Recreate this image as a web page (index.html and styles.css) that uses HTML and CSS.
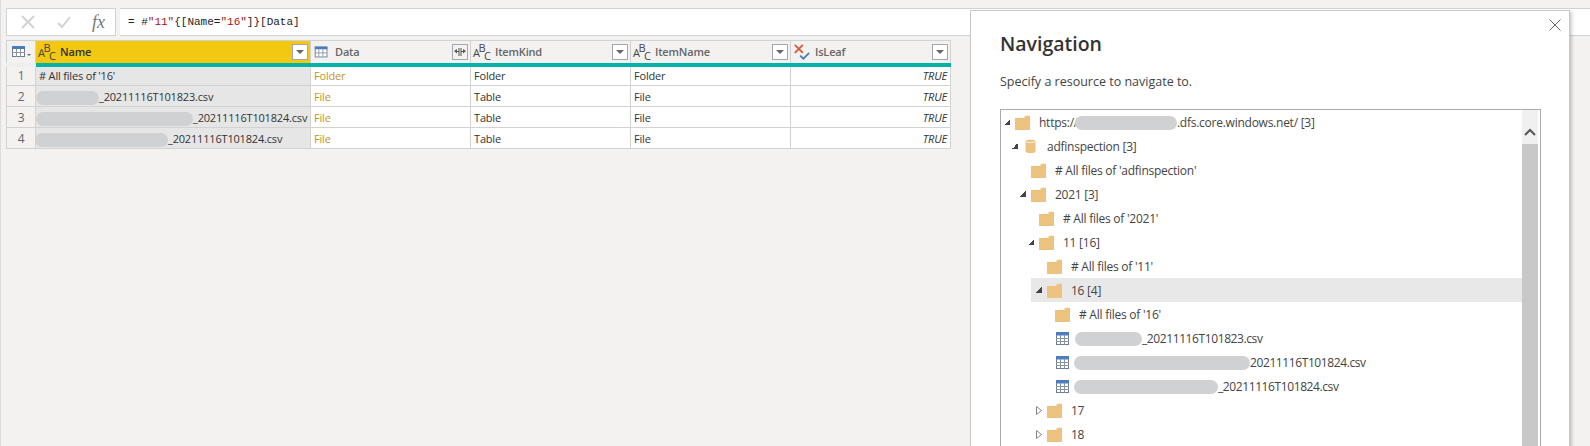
FILE: index.html
```html
<!DOCTYPE html>
<html lang="en">
<head>
    <meta charset="UTF-8">
    <title>Navigation</title>
    <link rel="stylesheet" href="styles.css">
</head>
<body>

<svg class="defs" width="0" height="0" aria-hidden="true">
    <symbol id="i-folder" viewBox="0 0 15 15">
        <path d="M0 3h9.500V1.500l1-.8H15V15H0z" fill="#ecc47f"/>
    </symbol>
    <symbol id="i-can" viewBox="0 0 10 15">
        <path d="M0 2.200C0 .4 10 .4 10 2.200v10.600C10 14.600 0 14.600 0 12.800z" fill="#ecc47f"/>
        <path d="M.5 2.800c2 1 7 1 9 0" fill="none" stroke="#fff" stroke-width=".8"/>
    </symbol>
    <symbol id="i-table" viewBox="0 0 13 13">
        <rect x=".5" y=".5" width="12" height="12" fill="#fff" stroke="#6d7c91"/>
        <rect x="0" y="0" width="13" height="3.500" fill="#4a7ebb"/>
        <path d="M4.500 3v10M8.500 3v10M0 6.500h13M0 9.500h13" stroke="#8a94a3"/>
    </symbol>
    <symbol id="i-bool" viewBox="0 0 20 20">
        <path d="M2 2l9 9M11 2l-9 9" stroke="#d9593d" stroke-width="2" fill="none"/>
        <path d="M8 14l3.500 3.500L18 11" stroke="#4a7ebb" stroke-width="2" fill="none"/>
    </symbol>
</svg>

<div class="formula-bar">
    <div class="formula-btns">
        <svg class="fb-icon" width="16" height="16" viewBox="0 0 16 16"><path d="M2 2l12 12M14 2L2 14" stroke="#d2d2d2" stroke-width="2"/></svg>
        <svg class="fb-icon" width="16" height="16" viewBox="0 0 16 16"><path d="M2 9l4 4 8-10" fill="none" stroke="#d2d2d2" stroke-width="2"/></svg>
        <span class="fx">fx</span>
    </div>
    <div class="formula-input">= #<span class="str">"11"</span>{[Name=<span class="str">"16"</span>]}[Data]</div>
</div>

<table class="grid">
    <thead>
        <tr>
            <th class="corner">
                <svg class="corner-icon" width="20" height="12" viewBox="0 0 20 12">
                    <rect x=".5" y=".5" width="12" height="10" fill="#fff" stroke="#6d7c91"/>
                    <rect x="0" y="0" width="13" height="3" fill="#4a7ebb"/>
                    <path d="M4.500 3v8M8.500 3v8M0 6.500h13" stroke="#8a94a3"/>
                    <path d="M15 8h4l-2 2z" fill="#666"/>
                </svg>
            </th>
            <th class="selected">
                <div class="col-head">
                    <span class="abc"><span>A</span><span class="up">B</span><span class="down">C</span></span>
                    <span class="col-name">Name</span>
                    <button class="filter"></button>
                </div>
            </th>
            <th>
                <div class="col-head">
                    <svg class="type-icon" viewBox="0 0 20 20">
                        <rect x="2.500" y="4.500" width="13" height="11" fill="#fff" stroke="#6d7c91"/>
                        <rect x="2" y="4" width="14" height="3" fill="#4a7ebb"/>
                        <path d="M6.500 7v8M11 7v8M2 11h13" stroke="#8a94a3"/>
                    </svg>
                    <span class="col-name">Data</span>
                    <button class="expand">
                        <svg width="12" height="9" viewBox="0 0 12 9"><path d="M4.500 1v3H3v-2L0 4l3 2.500v-1.500h1.500v4h1V1zM7.500 1v3H9v-2l3 2-3 2.500v-1.500H7.500v4h-1V1z" fill="#555"/></svg>
                    </button>
                </div>
            </th>
            <th>
                <div class="col-head">
                    <span class="abc"><span>A</span><span class="up">B</span><span class="down">C</span></span>
                    <span class="col-name">ItemKind</span>
                    <button class="filter"></button>
                </div>
            </th>
            <th>
                <div class="col-head">
                    <span class="abc"><span>A</span><span class="up">B</span><span class="down">C</span></span>
                    <span class="col-name">ItemName</span>
                    <button class="filter"></button>
                </div>
            </th>
            <th>
                <div class="col-head">
                    <svg class="type-icon"><use href="#i-bool"/></svg>
                    <span class="col-name">IsLeaf</span>
                    <button class="filter"></button>
                </div>
            </th>
        </tr>
    </thead>
    <tbody>
        <tr>
            <td class="num">1</td>
            <td class="sel-cell"># All files of '16'</td>
            <td class="link">Folder</td>
            <td>Folder</td>
            <td>Folder</td>
            <td class="bool">TRUE</td>
        </tr>
        <tr>
            <td class="num">2</td>
            <td class="sel-cell"><span class="blur b-a"></span>_20211116T101823.csv</td>
            <td class="link">File</td>
            <td>Table</td>
            <td>File</td>
            <td class="bool">TRUE</td>
        </tr>
        <tr>
            <td class="num">3</td>
            <td class="sel-cell"><span class="blur b-b"></span>_20211116T101824.csv</td>
            <td class="link">File</td>
            <td>Table</td>
            <td>File</td>
            <td class="bool">TRUE</td>
        </tr>
        <tr>
            <td class="num">4</td>
            <td class="sel-cell"><span class="blur b-c"></span>_20211116T101824.csv</td>
            <td class="link">File</td>
            <td>Table</td>
            <td>File</td>
            <td class="bool">TRUE</td>
        </tr>
    </tbody>
</table>

<div class="panel">
    <svg class="close" width="12" height="12" viewBox="0 0 12 12"><path d="M.5.5l11 11M11.500.5l-11 11" stroke="#666"/></svg>
    <h2>Navigation</h2>
    <p>Specify a resource to navigate to.</p>

    <div class="tree">
        <div class="tree-rows">
            <div class="row d0"><span class="arrow open"></span><svg class="ico"><use href="#i-folder"/></svg><span>https://<span class="blur t-a"></span>.dfs.core.windows.net/ [3]</span></div>
            <div class="row d1"><span class="arrow open"></span><svg class="ico"><use href="#i-can"/></svg><span>adfinspection [3]</span></div>
            <div class="row d2"><span class="arrow"></span><svg class="ico"><use href="#i-folder"/></svg><span># All files of 'adfinspection'</span></div>
            <div class="row d2"><span class="arrow open"></span><svg class="ico"><use href="#i-folder"/></svg><span>2021 [3]</span></div>
            <div class="row d3"><span class="arrow"></span><svg class="ico"><use href="#i-folder"/></svg><span># All files of '2021'</span></div>
            <div class="row d3"><span class="arrow open"></span><svg class="ico"><use href="#i-folder"/></svg><span>11 [16]</span></div>
            <div class="row d4"><span class="arrow"></span><svg class="ico"><use href="#i-folder"/></svg><span># All files of '11'</span></div>
            <div class="row d4 current"><span class="arrow open"></span><svg class="ico"><use href="#i-folder"/></svg><span>16 [4]</span></div>
            <div class="row d5"><span class="arrow"></span><svg class="ico"><use href="#i-folder"/></svg><span># All files of '16'</span></div>
            <div class="row d5 fname"><span class="arrow"></span><svg class="ico tbl"><use href="#i-table"/></svg><span><span class="blur t-b"></span>_20211116T101823.csv</span></div>
            <div class="row d5 fname"><span class="arrow"></span><svg class="ico tbl"><use href="#i-table"/></svg><span><span class="blur t-c"></span>20211116T101824.csv</span></div>
            <div class="row d5 fname"><span class="arrow"></span><svg class="ico tbl"><use href="#i-table"/></svg><span><span class="blur t-d"></span>_20211116T101824.csv</span></div>
            <div class="row d4"><svg class="arrow closed" viewBox="0 0 6 9"><path d="M.5.5l5 4-5 4z" fill="#fff" stroke="#888"/></svg><svg class="ico"><use href="#i-folder"/></svg><span>17</span></div>
            <div class="row d4"><svg class="arrow closed" viewBox="0 0 6 9"><path d="M.5.5l5 4-5 4z" fill="#fff" stroke="#888"/></svg><svg class="ico"><use href="#i-folder"/></svg><span>18</span></div>
        </div>
        <div class="scrollbar">
            <div class="scroll-up">
                <svg width="12" height="8" viewBox="0 0 12 8"><path d="M1 7l5-5 5 5" fill="none" stroke="#555" stroke-width="2"/></svg>
            </div>
        </div>
    </div>
</div>

</body>
</html>
```

FILE: styles.css
```css
html, body {
    height: 100%;
}
body {
    margin: 0;
    background-color: #f3f2f1;
    font-family: "Open Sans", "Noto Sans", sans-serif;
    font-size: 11px;
    color: #333;
    overflow: hidden;
    border-left: 1px solid #dcdcdc;
}
.defs {
    display: block;
    height: 0;
}

/* formula bar */
.formula-bar {
    display: flex;
    gap: 4px;
    height: 28px;
    margin: 8px 0 4px 5px;
}
.formula-btns {
    display: flex;
    align-items: center;
    box-sizing: border-box;
    width: 110px;
    padding-left: 13px;
    gap: 20px;
    background-color: #fff;
    border: 1px solid #d2d2d2;
}
.fx {
    font-family: "Liberation Serif", serif;
    font-style: italic;
    font-size: 18px;
    color: #777;
}
.formula-input {
    flex: 1;
    box-sizing: border-box;
    padding: 7px 0 0 8px;
    background-color: #fff;
    border-top: 1px solid #d2d2d2;
    border-bottom: 1px solid #d2d2d2;
    font-family: "Liberation Mono", monospace;
    font-size: 11px;
    color: #222;
}
.str {
    color: #a31515;
}

/* table */
.grid {
    margin-left: 5px;
    table-layout: fixed;
    width: 945px;
    border-collapse: collapse;
    letter-spacing: -0.18px;
}
.grid th, .grid td {
    box-sizing: border-box;
    padding: 0;
    border: 1px solid #d2d2d2;
}
.grid th {
    height: 24px;
    background-color: #f3f2f1;
    border-bottom: 4px solid #00b3a4;
    text-align: left;
    font-weight: 600;
    color: #666;
}
.grid th:nth-child(1) { width: 29px; }
.grid th:nth-child(2) { width: 275px; }
.grid th:nth-child(n+3) { width: 160px; }
.grid th.corner {
    border-bottom-color: #eeeeee;
}
.corner-icon {
    display: block;
    margin-left: 5px;
}
.grid th.selected {
    background-color: #f2c811;
    color: #333;
}
.col-head {
    display: flex;
    align-items: center;
    height: 20px;
    padding: 0 2px;
}
.type-icon {
    flex: none;
    width: 18px;
    height: 18px;
}
/* the ABC type marker: letters stepped up and down */
.abc {
    flex: none;
    display: flex;
    width: 18px;
    height: 18px;
    font-size: 11px;
    line-height: 18px;
    font-weight: 400;
    color: #444;
    letter-spacing: -1.5px;
}
.abc span {
    margin-top: 1px;
    height: 17px;
}
.abc .up {
    margin-top: -4px;
}
.abc .down {
    margin-top: 4px;
}
.col-name {
    flex: 1;
    margin-left: 4px;
}
.filter, .expand {
    flex: none;
    display: flex;
    align-items: center;
    justify-content: center;
    box-sizing: border-box;
    width: 16px;
    height: 16px;
    padding: 0;
    background-color: #fff;
    border: 1px solid #a6a6a6;
}
.filter::after {
    content: "";
    border-top: 4px solid #666;
    border-left: 4px solid transparent;
    border-right: 4px solid transparent;
}
.expand {
    background-color: #f3f2f1;
    border-color: #a0a8b8;
}
.grid td {
    height: 21px;
    padding: 0 3px;
    background-color: #fff;
    white-space: nowrap;
    overflow: hidden;
}
.grid td.num {
    background-color: #f3f2f1;
    padding: 0;
    text-align: center;
    color: #666;
    font-size: 12px;
}
.grid td.sel-cell {
    background-color: #e6e6e6;
}
.grid td.link {
    color: #c4941d;
}
.grid td.bool {
    text-align: right;
    font-style: italic;
}

/* hidden names */
.blur {
    display: inline-block;
    height: 14px;
    margin-top: -3px;
    margin-bottom: -3px;
    border-radius: 7px;
    background-color: #d0d1d3;
    vertical-align: middle;
}
.b-a { width: 63px; margin-left: -3px; }
.b-b { width: 157px; margin-left: -3px; }
.b-c { width: 133px; margin-left: -4px; }
.t-a { width: 102px; margin-left: -3px; }
.t-b { width: 67px; margin-left: 1px; }
.t-c { width: 176px; }
.t-d { width: 144px; }

/* navigation panel */
.panel {
    position: absolute;
    left: 970px;
    top: 10px;
    width: 600px;
    height: 500px;
    box-sizing: border-box;
    padding: 20px 29px 0;
    background-color: #fff;
    border: 1px solid #c8c8c8;
    box-shadow: 2px 2px 3px rgba(0, 0, 0, 0.2);
}
.close {
    position: absolute;
    top: 8px;
    right: 8px;
}
.panel h2 {
    margin: 0;
    font-size: 19.5px;
    line-height: 26px;
    font-weight: 600;
    color: #333;
}
.panel p {
    margin: 16px 0 18px;
    font-size: 12.5px;
    line-height: 18px;
    color: #444;
}
.tree {
    display: flex;
    box-sizing: border-box;
    width: 541px;
    height: 360px;
    border: 1px solid #aaaaaa;
    overflow: hidden;
}
.tree-rows {
    flex: 1;
    min-width: 0;
    overflow: hidden;
}
.row {
    display: flex;
    align-items: center;
    height: 24px;
    padding-left: 5px;
    font-size: 12px;
    letter-spacing: -0.25px;
    color: #444;
    white-space: nowrap;
}
.row.fname {
    letter-spacing: -0.4px;
}
.d0 { margin-left: -2px; }
.d1 { margin-left: 6px; }
.d2 { margin-left: 14px; }
.d3 { margin-left: 22px; }
.d4 { margin-left: 30px; }
.d5 { margin-left: 38px; }
.current {
    background-color: #e8e8e8;
}
.arrow {
    flex: none;
    box-sizing: border-box;
    width: 6px;
    height: 6px;
    margin-right: 5px;
}
.arrow.open {
    background: linear-gradient(135deg, transparent 50%, #444 50%);
}
.arrow.closed {
    height: 9px;
}
.ico {
    flex: none;
    width: 15px;
    height: 15px;
    margin-right: 9px;
}
.ico.tbl {
    width: 13px;
    height: 13px;
    margin-left: 1px;
    margin-right: 5px;
}
.scrollbar {
    flex: none;
    width: 16px;
    margin-right: 2px;
    background-color: #c8c8c8;
}
.scroll-up {
    display: flex;
    align-items: flex-start;
    justify-content: center;
    box-sizing: border-box;
    height: 34px;
    padding-top: 18px;
    background-color: #f0f0f0;
}
```
